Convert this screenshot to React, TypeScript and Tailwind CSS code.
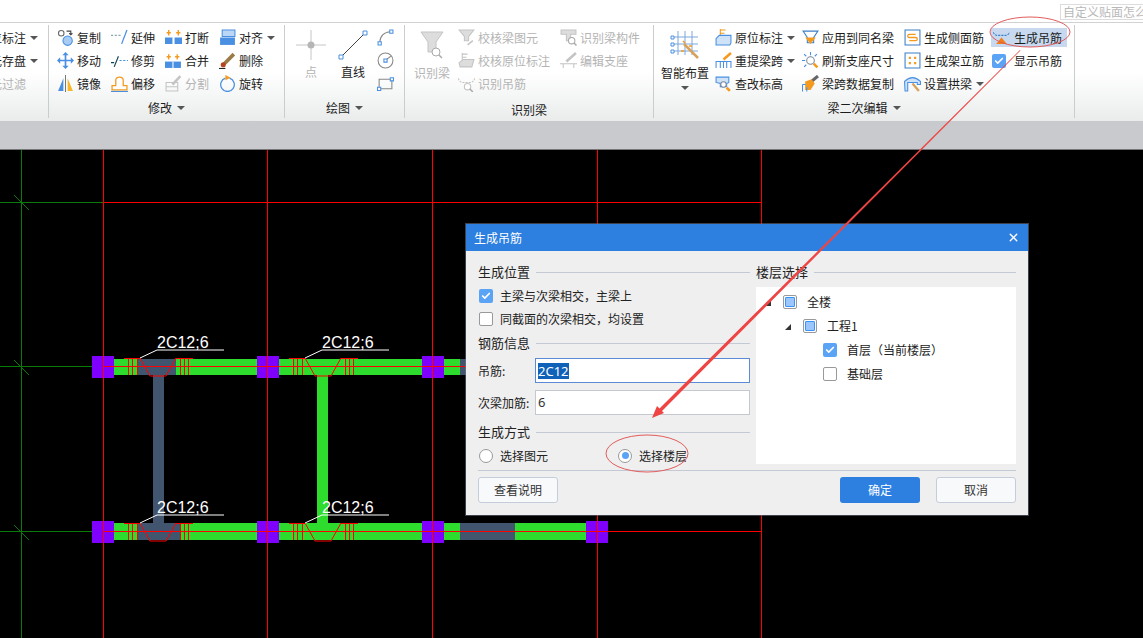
import { ReactNode } from "react";
import { Check, X } from "lucide-react";

const BLUE = "#4a90e2";
const ORANGE = "#f39a1f";
const GRAY = "#c4c4c4";

// 16x16 ribbon glyphs
const icons: Record<string, ReactNode> = {
  copy: (
    <>
      <circle cx="4" cy="4" r="2.6" fill="#fff" stroke="#666" />
      <circle cx="10" cy="11" r="4.4" fill="#a9cdf2" stroke={BLUE} />
      <path d="M9 2h4v3M11.5 4l1.5 1.5L14.5 4" fill="none" stroke="#444" />
    </>
  ),
  extend: (
    <>
      <path d="M0 6h10" stroke="#8aa" strokeDasharray="2 1.5" />
      <path d="M15 1l-5 13" stroke={BLUE} strokeWidth="1.2" />
    </>
  ),
  breakup: (
    <>
      <path d="M0 8h7v6H0zM9 8h7v6H9z" fill={BLUE} />
      <path d="M3.5 1v5M1.5 3.5h4M12.5 1v5M10.5 3.5h4" stroke={ORANGE} strokeWidth="1.3" />
    </>
  ),
  align: (
    <>
      <path d="M3 1h12v6H3z" fill="#bcd7f5" stroke={BLUE} />
      <path d="M1 8h14v7H1z" fill={BLUE} />
    </>
  ),
  move: (
    <>
      <path d="M2 8h12M8 2v12" stroke={BLUE} strokeWidth="1.6" />
      <path d="M8 0l3 3H5zM8 16l3-3H5zM0 8l3-3v6zM16 8l-3-3v6z" fill={BLUE} />
    </>
  ),
  trim: (
    <>
      <path d="M7 4L3 14M0 10h3" stroke="#145" strokeWidth="1.1" />
      <path d="M8 8h8" stroke={BLUE} strokeDasharray="2 1.5" />
    </>
  ),
  merge: (
    <>
      <path d="M0 9h15v6H0z" fill={BLUE} />
      <path d="M7.5 9v6" stroke="#fff" />
      <path d="M3.5 2v5M1.5 4.5h4M11.5 2v5M9.5 4.5h4" stroke={ORANGE} strokeWidth="1.3" />
    </>
  ),
  erase: (
    <>
      <path d="M14 2L5 11" stroke="#9b7b45" strokeWidth="3.4" />
      <circle cx="4" cy="12" r="2.4" fill="#b5451f" />
      <path d="M0 15.5h6" stroke="#222" />
    </>
  ),
  mirror: (
    <>
      <path d="M6 3L1 15h5z" fill={BLUE} />
      <path d="M8 0v16" stroke="#777" />
      <path d="M10 3l5 12h-5z" fill="#f6b72b" />
    </>
  ),
  offset: (
    <>
      <path d="M1 14V10h3.5V5Q4.5 2 8 2t3.5 3v5H15v4z" fill="#fff" stroke={ORANGE} strokeWidth="1.2" />
      <path d="M0 15.5h16" stroke={BLUE} />
    </>
  ),
  split: (
    <>
      <path d="M1 7h11v8H1zM1 11h11" fill="none" stroke={GRAY} />
      <path d="M14.5 1L7 9" stroke={GRAY} strokeWidth="2.4" />
    </>
  ),
  rotate: (
    <>
      <path d="M6 3a6.4 6.4 0 1 0 4 0" fill="none" stroke={BLUE} strokeWidth="1.2" />
      <path d="M6 0l5 2.5L6 5z" fill={ORANGE} />
    </>
  ),
  arc: (
    <>
      <path d="M2.5 13Q3 3 13 2.5" fill="none" stroke="#888" />
      <path d="M1 12h3v3H1zM12 1h3v3h-3z" fill="#fff" stroke={BLUE} />
    </>
  ),
  circle: (
    <>
      <circle cx="8" cy="8" r="7" fill="none" stroke="#888" />
      <path d="M6.5 6.5h3v3h-3z" fill="#fff" stroke={BLUE} />
      <path d="M9 7l4-3" stroke="#888" />
    </>
  ),
  rect: (
    <>
      <path d="M2 4h12v9H2z" fill="none" stroke="#888" />
      <path d="M0.5 11.5h3v3h-3zM12.5 2.5h3v3h-3z" fill="#fff" stroke={BLUE} />
    </>
  ),
  checkBeam: (
    <>
      <path d="M1 1h14l-5 6v4H6V7z" fill="#ddd" stroke={GRAY} />
      <path d="M9 15l5-4" stroke={GRAY} strokeWidth="1.4" />
    </>
  ),
  checkMark: (
    <>
      <path d="M4 1v8M4 2h5M4 5h4" stroke={GRAY} />
      <path d="M1 10l4-3h10l-2 7H2z" fill="#ddd" stroke={GRAY} />
    </>
  ),
  findHanger: (
    <>
      <path d="M0 3q2 4 4 4h8q2 0 4-4" fill="none" stroke={GRAY} strokeDasharray="2 1" />
      <circle cx="9" cy="11" r="3" fill="#fff" stroke={GRAY} />
      <path d="M11 13l3 3" stroke="#aaa" strokeWidth="1.4" />
    </>
  ),
  findPart: (
    <>
      <path d="M1 1h14v4h-5v6H6V5H1z" fill="#ddd" stroke={GRAY} />
      <circle cx="11" cy="11" r="3" fill="#fff" stroke="#aaa" />
      <path d="M13 13l2.5 2.5" stroke="#aaa" strokeWidth="1.4" />
    </>
  ),
  support: (
    <>
      <path d="M15 1L6 9" stroke={GRAY} strokeWidth="2.4" />
      <path d="M0 11h16M3 15v-4M13 15v-4" stroke={GRAY} />
    </>
  ),
  spanMark: (
    <>
      <path d="M5 0v8M5 1h5M5 4h4" stroke={ORANGE} />
      <path d="M1 9l3-3h11v7l-1 2H1z" fill="#cfe2f7" stroke={BLUE} />
    </>
  ),
  respan: (
    <>
      <path d="M15 1L8 7" stroke={ORANGE} strokeWidth="2.4" />
      <path d="M1 15V9h14v6M5 15V9M8 15V9M11 15V9" fill="none" stroke={BLUE} />
    </>
  ),
  height: (
    <>
      <path d="M1 2h12v5l-2 1v3H5V8L1 7z" fill="#cfe2f7" stroke={BLUE} />
      <circle cx="8" cy="9" r="2.6" fill="#fff" stroke="#789" />
      <path d="M11 12l3 3" stroke={ORANGE} strokeWidth="2.4" />
    </>
  ),
  applySame: (
    <>
      <path d="M1 2h14l-4 6v5H5V8z" fill="none" stroke="#3b7fc8" />
      <path d="M3 8h10l-5 6z" fill={ORANGE} />
    </>
  ),
  refresh: (
    <>
      <circle cx="8" cy="8" r="3.6" fill="#fff" stroke="#789" />
      <path d="M8 0v3M0 8h3M2 2l2 2M14 2l-2 2M2 14l2-2" stroke={BLUE} />
      <path d="M11 11l3.5 3.5" stroke={ORANGE} strokeWidth="2.4" />
    </>
  ),
  brush: (
    <>
      <path d="M15 1L9 6" stroke="#666" strokeWidth="3" />
      <path d="M3 6l6-2 3 4-4 6H3z" fill={ORANGE} />
      <path d="M0.5 15.5V9M0.5 9h3M4.5 15.5v-4" stroke={BLUE} />
    </>
  ),
  sideBar: (
    <>
      <path d="M1 1h14v14H1z" fill="#fff" stroke="#3b7fc8" />
      <path d="M11 5H5Q3.5 5 3.5 6.500T5 8h6q1.500 0 1.500 1.500T11 11H5" fill="none" stroke={ORANGE} strokeWidth="1.2" />
    </>
  ),
  erect: (
    <>
      <path d="M1 1h14v14H1z" fill="#fff" stroke="#3b7fc8" />
      <path d="M4.500 4.500h2v2h-2zM9.500 4.500h2v2h-2zM4.500 9.500h2v2h-2zM9.500 9.500h2v2h-2z" fill={ORANGE} />
    </>
  ),
  arch: (
    <>
      <path d="M0.500 6Q8-1 15.500 6v3h-3V7H3.500v8H1z" fill="#cfe2f7" stroke={BLUE} />
      <path d="M14 15L8 8" stroke="#d9a25a" strokeWidth="2.2" />
    </>
  ),
  hanger: (
    <>
      <path d="M0 3q2 3 4 3h8q2 0 4-3" fill="none" stroke="#3b7fc8" strokeDasharray="2 1" />
      <path d="M8 8l5 6H3z" fill="#f07f17" />
    </>
  ),
};

function Glyph({ name, size = 17 }: { name: string; size?: number }) {
  return (
    <svg viewBox="0 0 16 16" width={size} height={size} className="shrink-0">
      {icons[name]}
    </svg>
  );
}

function Caret() {
  return <span className="inline-block border-x-[4px] border-t-[4px] border-x-transparent border-t-[#555]" />;
}

function Tool({ icon, label, caret, off }: { icon?: string; label: string; caret?: boolean; off?: boolean }) {
  return (
    <div className={`flex h-[23px] items-center whitespace-nowrap ${off ? "text-[#b4b4b4]" : "text-[#1c1c1c]"}`}>
      {icon && <Glyph name={icon} />}
      <span className={icon ? "ml-[3px]" : ""}>{label}</span>
      {caret && (
        <span className="ml-[4px] flex">
          <Caret />
        </span>
      )}
    </div>
  );
}

function Sep() {
  return <div className="mt-[2px] mb-[3px] w-px shrink-0 bg-[#c9cdcd]" />;
}

function GroupLabel({ text, caret = true }: { text: string; caret?: boolean }) {
  return (
    <div className="flex h-[21px] items-center justify-center gap-[5px] text-[#1c1c1c]">
      <span>{text}</span>
      {caret && <Caret />}
    </div>
  );
}

function Ribbon() {
  return (
    <div
      className="flex h-[98px] shrink-0 bg-gradient-to-b from-white from-50% to-[#eaecec] text-xs shadow-[0_1px_2px_rgba(0,0,0,0.45)]"
      style={{ fontFamily: '"Noto Sans CJK SC", sans-serif' }}
    >
      {/* clipped group on the left */}
      <div className="w-[48px] shrink-0 overflow-hidden pt-[3px]">
        <div className="ml-[-22px] w-[70px]">
          <Tool label="原位标注" caret />
          <Tool label="图元存盘" caret />
          <Tool label="图元过滤" off />
        </div>
      </div>
      <Sep />

      {/* 修改 */}
      <div className="flex w-[235px] shrink-0 flex-col">
        <div className="flex h-[74px] pt-[3px] pl-[8px]">
          <div className="w-[54px]">
            <Tool icon="copy" label="复制" />
            <Tool icon="move" label="移动" />
            <Tool icon="mirror" label="镜像" />
          </div>
          <div className="w-[54px]">
            <Tool icon="extend" label="延伸" />
            <Tool icon="trim" label="修剪" />
            <Tool icon="offset" label="偏移" />
          </div>
          <div className="w-[54px]">
            <Tool icon="breakup" label="打断" />
            <Tool icon="merge" label="合并" />
            <Tool icon="split" label="分割" off />
          </div>
          <div>
            <Tool icon="align" label="对齐" caret />
            <Tool icon="erase" label="删除" />
            <Tool icon="rotate" label="旋转" />
          </div>
        </div>
        <GroupLabel text="修改" />
      </div>
      <Sep />

      {/* 绘图 */}
      <div className="flex w-[119px] shrink-0 flex-col">
        <div className="flex h-[74px] pt-[3px] pl-[6px]">
          <div className="flex w-[40px] flex-col items-center text-[#b4b4b4]">
            <svg viewBox="0 0 30 30" width="30" height="30" className="mt-[4px]">
              <path d="M15 0v30M0 15h30" stroke="#c6c6c6" />
              <circle cx="15" cy="15" r="3.500" fill="#b5b5b5" />
            </svg>
            <span className="mt-[4px]">点</span>
          </div>
          <div className="flex w-[44px] flex-col items-center text-[#1c1c1c]">
            <svg viewBox="0 0 30 30" width="30" height="30" className="mt-[4px]">
              <path d="M3 27L27 3" stroke="#444" />
              <path d="M1 25h4v4H1zM25 1h4v4h-4z" fill="#fff" stroke={BLUE} />
            </svg>
            <span className="mt-[4px]">直线</span>
          </div>
          <div className="ml-[2px]">
            <Tool icon="arc" label="" />
            <Tool icon="circle" label="" />
            <Tool icon="rect" label="" />
          </div>
        </div>
        <GroupLabel text="绘图" />
      </div>
      <Sep />

      {/* 识别梁 */}
      <div className="flex w-[248px] shrink-0 flex-col">
        <div className="flex h-[74px] pt-[3px] pl-[7px]">
          <div className="flex w-[40px] flex-col items-center text-[#b4b4b4]">
            <svg viewBox="0 0 24 28" width="24" height="28" className="mt-[5px]">
              <path d="M1 1h22l-7 10v10H8V11z" fill="#ddd" stroke={GRAY} />
              <circle cx="16" cy="21" r="4" fill="#fff" stroke="#aaa" />
              <path d="M19 24l3 3" stroke="#aaa" strokeWidth="1.500" />
            </svg>
            <span className="mt-[6px]">识别梁</span>
          </div>
          <div className="ml-[6px] w-[102px]">
            <Tool icon="checkBeam" label="校核梁图元" off />
            <Tool icon="checkMark" label="校核原位标注" off />
            <Tool icon="findHanger" label="识别吊筋" off />
          </div>
          <div>
            <Tool icon="findPart" label="识别梁构件" off />
            <Tool icon="support" label="编辑支座" off />
          </div>
        </div>
        <div className="mt-[2px]">
          <GroupLabel text="识别梁" caret={false} />
        </div>
      </div>
      <Sep />

      {/* 梁二次编辑 */}
      <div className="flex w-[420px] shrink-0 flex-col">
        <div className="flex h-[74px] pt-[3px] pl-[5px]">
          <div className="flex w-[52px] flex-col items-center text-[#1c1c1c]">
            <svg viewBox="0 0 30 30" width="30" height="30" className="mt-[4px]">
              <path d="M8 1v24M15 1v24M22 1v24M3 7h25M3 14h25M3 21h25" stroke="#7aa7dc" />
              <path d="M1 6h3v3H1zM1 13h3v3H1zM1 20h3v3H1z" fill="#fff" stroke={BLUE} />
              <path d="M28 28L14 14" stroke="#d9a25a" strokeWidth="2.500" />
              <path d="M13 11l2 2M19 16h3M11 21h3" stroke={ORANGE} strokeWidth="1.500" />
            </svg>
            <span className="mt-[5px] leading-[16px]">智能布置</span>
            <span className="mt-[5px] flex">
              <Caret />
            </span>
          </div>
          <div className="ml-[4px] w-[87px]">
            <Tool icon="spanMark" label="原位标注" caret />
            <Tool icon="respan" label="重提梁跨" caret />
            <Tool icon="height" label="查改标高" />
          </div>
          <div className="w-[102px]">
            <Tool icon="applySame" label="应用到同名梁" />
            <Tool icon="refresh" label="刷新支座尺寸" />
            <Tool icon="brush" label="梁跨数据复制" />
          </div>
          <div className="w-[87px]">
            <Tool icon="sideBar" label="生成侧面筋" />
            <Tool icon="erect" label="生成架立筋" />
            <Tool icon="arch" label="设置拱梁" caret />
          </div>
          <div>
            <div className="flex h-[23px] items-center">
              <div className="flex h-[19px] w-[76px] items-center bg-[#c7d8ef] pl-[2px] text-[#1c1c1c]">
                <Glyph name="hanger" />
                <span className="ml-[4px] whitespace-nowrap">生成吊筋</span>
              </div>
            </div>
            <div className="flex h-[23px] items-center pl-px text-[#1c1c1c]">
              <Box checked />
              <span className="ml-[8px] whitespace-nowrap">显示吊筋</span>
            </div>
          </div>
        </div>
        <GroupLabel text="梁二次编辑" />
      </div>
      <Sep />
    </div>
  );
}

function Box({ checked, mixed }: { checked?: boolean; mixed?: boolean }) {
  if (checked)
    return (
      <span className="flex h-[14px] w-[14px] shrink-0 items-center justify-center rounded-[2px] bg-[#5ba3f5]">
        <Check size={10} strokeWidth={4} color="#fff" />
      </span>
    );
  return (
    <span className="flex h-[14px] w-[14px] shrink-0 items-center justify-center rounded-[2px] border border-[#999] bg-white">
      {mixed && <span className="h-[10px] w-[10px] rounded-[1px] border border-[#3b94f5] bg-[#9cc6ff]" />}
    </span>
  );
}

function Radio({ on }: { on?: boolean }) {
  return (
    <span className="flex h-[14px] w-[14px] shrink-0 items-center justify-center rounded-full border border-[#999] bg-white">
      {on && <span className="h-[7px] w-[7px] rounded-full bg-[#5ba3f5]" />}
    </span>
  );
}

function Heading({ text }: { text: string }) {
  return (
    <div className="flex h-[18px] items-center gap-[6px] text-[13px] text-[#222]">
      <span className="whitespace-nowrap">{text}</span>
      <span className="h-px flex-1 bg-[#c3cad6]" />
    </div>
  );
}

function Field({ label, children, active }: { label: string; children: ReactNode; active?: boolean }) {
  return (
    <div className="flex h-[25px] items-center">
      <span className="w-[57px] shrink-0 whitespace-nowrap text-[#222]">{label}</span>
      <div
        className={`flex h-full flex-1 items-center border bg-white pl-[2px] text-[13px] text-[#333] ${
          active ? "border-[#5b8ad6]" : "border-[#c4c9d0]"
        }`}
        style={{ fontFamily: '"Noto Sans", sans-serif' }}
      >
        {children}
      </div>
    </div>
  );
}

function TreeRow({ indent, caret, label, children }: { indent: string; caret?: boolean; label: string; children: ReactNode }) {
  return (
    <div className={`flex h-[24px] items-center ${indent}`}>
      <span className="flex w-[27px] justify-start">
        {caret && (
          <span className="mt-[2px] ml-[9px] h-0 w-0 border-b-[6px] border-l-[6px] border-b-[#333] border-l-transparent" />
        )}
      </span>
      {children}
      <span className="ml-[10px] whitespace-nowrap text-[#222]">{label}</span>
    </div>
  );
}

function Dialog() {
  return (
    <div
      className="absolute top-[224px] left-[466px] w-[562px] bg-[#efefef] text-xs shadow-[0_0_0_1px_rgba(120,130,150,0.5)]"
      style={{ fontFamily: '"Noto Sans CJK SC", sans-serif' }}
    >
      <div className="flex h-[27px] items-center justify-between bg-[#2d7fe0] pr-[8px] pl-[8px] text-white">
        <span>生成吊筋</span>
        <X size={13} strokeWidth={2.5} />
      </div>
      <div className="px-[12px] pt-[12px] pb-[12px]">
        <div className="grid h-[204px] grid-cols-[272px_260px] gap-x-[6px]">
          <div>
            <Heading text="生成位置" />
            <div className="mt-[3px] flex h-[23px] items-center gap-[7px] pl-px text-[#222]">
              <Box checked />
              <span>主梁与次梁相交，主梁上</span>
            </div>
            <div className="flex h-[23px] items-center gap-[7px] pl-px text-[#222]">
              <Box />
              <span>同截面的次梁相交，均设置</span>
            </div>
            <div className="mt-[4px]">
              <Heading text="钢筋信息" />
            </div>
            <div className="mt-[6px]">
              <Field label="吊筋:" active>
                <span className="bg-[#0f62b8] leading-[16px] text-white">2C12</span>
              </Field>
            </div>
            <div className="mt-[7px]">
              <Field label="次梁加筋:">6</Field>
            </div>
            <div className="mt-[8px]">
              <Heading text="生成方式" />
            </div>
            <div className="mt-[3px] flex h-[23px] items-center pl-px text-[#222]">
              <div className="flex w-[139px] items-center gap-[7px]">
                <Radio />
                <span>选择图元</span>
              </div>
              <div className="flex items-center gap-[7px]">
                <Radio on />
                <span>选择楼层</span>
              </div>
            </div>
          </div>
          <div className="flex flex-col">
            <Heading text="楼层选择" />
            <div className="mt-[6px] h-[177px] bg-white pt-[3px]">
              <TreeRow indent="pl-[0px]" caret label="全楼">
                <Box mixed />
              </TreeRow>
              <TreeRow indent="pl-[20px]" caret label="工程1">
                <Box mixed />
              </TreeRow>
              <TreeRow indent="pl-[40px]" label="首层（当前楼层）">
                <Box checked />
              </TreeRow>
              <TreeRow indent="pl-[40px]" label="基础层">
                <Box />
              </TreeRow>
            </div>
          </div>
        </div>
        <div className="mt-[3px] h-px bg-[#c3cad6]" />
        <div className="mt-[6px] flex h-[26px] items-stretch">
          <button className="w-[80px] rounded-[3px] border border-[#c5cdda] bg-[#f8f9fb] text-[#333]">查看说明</button>
          <button className="ml-auto w-[80px] rounded-[3px] bg-[#2d7fe0] text-white">确定</button>
          <button className="ml-[16px] w-[80px] rounded-[3px] border border-[#c5cdda] bg-[#f8f9fb] text-[#333]">取消</button>
        </div>
      </div>
    </div>
  );
}

// the hanger bar symbol on a main beam, plus its leader and text
function Hanger({ dx, y }: { dx: number; y: number }) {
  const x = 140 + dx;
  return (
    <g>
      <g stroke="#ff0000" fill="none" shapeRendering="crispEdges">
        <path d={`M${x - 16} ${y}h16M${x + 36} ${y}h17`} />
        <path d={`M${x - 12} ${y}v17M${x - 8} ${y}v17M${x - 3} ${y}v17M${x + 40} ${y}v17M${x + 44} ${y}v17M${x + 48} ${y}v17`} />
      </g>
      <path d={`M${x} ${y}l10 18h16l10-18`} stroke="#ff0000" fill="none" />
      <path d={`M${x} ${y}l17-8h67`} stroke="#fff" fill="none" />
      <text x={x + 17} y={y - 10} fill="#fff" fontSize="16" fontFamily='"Liberation Sans", sans-serif'>
        2C12;6
      </text>
    </g>
  );
}

function Canvas() {
  const columns = [103, 267, 432, 597, 761];
  const pillars = [92, 257, 422];
  return (
    <svg viewBox="0 150 1143 488" className="block h-[488px] w-full bg-black">
      <g shapeRendering="crispEdges">
        {/* axis lines */}
        <path d="M21.500 150v488M0 202.500h103M0 366.500h103M0 531.500h103" stroke="#0a7a0a" />
        <path d="M14 195l15 15M14 360l15 15M14 525l15 15" stroke="#0a7a0a" />
        {/* beams */}
        <rect x="114" y="359" width="360" height="16" fill="#2ddc2d" />
        <rect x="137" y="359" width="39" height="16" fill="#41566e" />
        <rect x="460" y="359" width="20" height="16" fill="#41566e" />
        <rect x="114" y="523" width="472" height="17" fill="#2ddc2d" />
        <rect x="137" y="523" width="44" height="17" fill="#41566e" />
        <rect x="460" y="523" width="55" height="17" fill="#41566e" />
        <rect x="153" y="375" width="11" height="148" fill="#41566e" />
        <rect x="317" y="375" width="11" height="148" fill="#2ddc2d" />
        {/* columns */}
        {pillars.map((x) => (
          <g key={x}>
            <rect x={x} y="356" width="22" height="22" fill="#8000ff" />
            <rect x={x} y="521" width="22" height="22" fill="#8000ff" />
          </g>
        ))}
        <rect x="586" y="521" width="22" height="22" fill="#8000ff" />
        {/* red axis */}
        {columns.map((x) => (
          <path key={x} d={`M${x + 0.5} 150v488`} stroke="#ff0000" />
        ))}
        <path d="M103 202.500h658M103 366.500h400M103 531.500h658" stroke="#ff0000" />
      </g>
      <Hanger dx={0} y={358} />
      <Hanger dx={165} y={358} />
      <Hanger dx={0} y={523} />
      <Hanger dx={165} y={523} />
    </svg>
  );
}

function Notes() {
  return (
    <svg viewBox="0 0 1143 638" className="pointer-events-none absolute inset-0 h-[638px] w-[1143px]">
      <ellipse cx="1030" cy="32" rx="40" ry="15" fill="none" stroke="#e25b5b" />
      <ellipse cx="647" cy="453.500" rx="41" ry="18.500" fill="none" stroke="#e25b5b" />
      <path d="M1020 50L1020.500 50.500L661 412L658.500 409.500Z" fill="#ee4444" />
      <path d="M652 418L657 406L664 413Z" fill="#ee4444" />
    </svg>
  );
}

export default function App() {
  return (
    <div className="relative flex h-[638px] w-[1143px] flex-col overflow-hidden bg-white">
      {/* title strip */}
      <div className="flex h-[23px] shrink-0 items-start justify-end border-b border-[#d9d9d9] bg-white pt-[4px]">
        <div
          className="h-[16px] w-[83px] overflow-hidden border border-r-0 border-[#dcdcdc] pl-[2px] text-xs leading-[14px] whitespace-nowrap text-[#b8b8b8]"
          style={{ fontFamily: '"Noto Sans CJK SC", sans-serif' }}
        >
          自定义贴面怎么处理
        </div>
      </div>
      <Ribbon />
      <div className="h-[29px] shrink-0 border-b border-[#777] bg-[#c8cacd]" />
      <Canvas />
      <Dialog />
      <Notes />
    </div>
  );
}
